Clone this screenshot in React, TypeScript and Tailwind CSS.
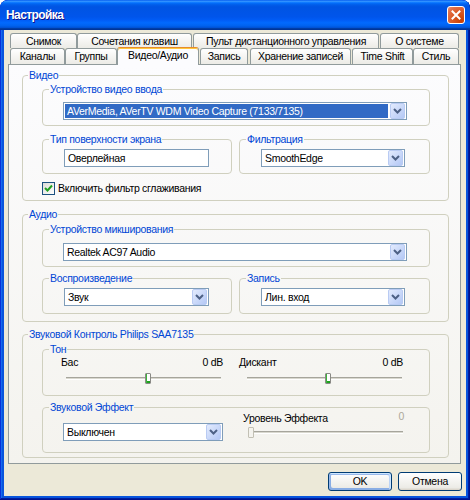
import React from 'react';

const Chevron = () => (
  <svg width="9" height="6" viewBox="0 0 9 6">
    <path d="M1 1 L4.5 4.5 L8 1" stroke="#4D6185" strokeWidth="2" fill="none" />
  </svg>
);

function Combo({ text, className, selected }: { text: string; className: string; selected?: boolean }) {
  return (
    <div className={`flex h-[18px] items-center border border-[#7F9DB9] bg-white ${className}`}>
      <div className="flex-1 h-full p-[1px] min-w-0">
        <div
          className={`h-full flex items-center pl-[2px] whitespace-nowrap overflow-hidden ${
            selected ? 'bg-[#316AC5] text-white' : 'text-black'
          }`}
        >
          {text}
        </div>
      </div>
      <div className="w-[15px] h-[16px] mr-[1px] ml-[1px] flex items-center justify-center rounded-[2px] border border-[#B9CBF3] bg-gradient-to-br from-[#E3EBFD] to-[#B4C8F5]">
        <Chevron />
      </div>
    </div>
  );
}

function Group({
  label,
  className = '',
  legendClass = 'ml-[6px]',
  children,
}: {
  label: string;
  className?: string;
  legendClass?: string;
  children: React.ReactNode;
}) {
  return (
    <fieldset className={`border border-[#D0D0BF] rounded-[4px] min-w-0 ${className}`}>
      <legend className={`px-[1px] text-[#0046D5] leading-[13px] ${legendClass}`}>{label}</legend>
      {children}
    </fieldset>
  );
}

function Slider({ pos, disabled, className }: { pos: number; disabled?: boolean; className: string }) {
  return (
    <div className={`relative h-[11px] flex flex-col justify-center ${className}`}>
      <div className="h-[3px] border-t border-t-[#A6A59C] border-b border-b-white bg-[#D9D8CF]" />
      <div
        className={`absolute top-0 w-[6px] h-[11px] rounded-[1px] border ${
          disabled
            ? 'border-[#C2C0B4] bg-[#F4F3EE]'
            : 'border-[#8A8A86] bg-white shadow-[inset_1px_0_0_#3CB43C,inset_0_-2px_0_#21A121]'
        }`}
        style={{ left: pos }}
      />
    </div>
  );
}

const row1 = [
  { t: 'Снимок', c: 'w-[67px]' },
  { t: 'Сочетания клавиш', c: 'w-[115px]' },
  { t: 'Пульт дистанционного управления', c: 'w-[186px] ml-[1px]' },
  { t: 'О системе', c: 'w-[79px] ml-[1px]' },
];

const row2 = [
  { t: 'Каналы', c: 'w-[55px]' },
  { t: 'Группы', c: 'w-[52px]' },
  { t: 'Видео/Аудио', c: 'w-[82px]', sel: true },
  { t: 'Запись', c: 'w-[48px] ml-[1px]' },
  { t: 'Хранение записей', c: 'w-[101px] ml-[2px]' },
  { t: 'Time Shift', c: 'w-[61px] ml-[1px]' },
  { t: 'Стиль', c: 'w-[46px]' },
];

const tabBase =
  'h-full flex items-center justify-center whitespace-nowrap border border-b-0 border-[#919B9C] rounded-t-[3px] bg-gradient-to-b from-white to-[#ECEBE6] text-black';

export default function App() {
  return (
    <div className="w-[470px] h-[500px] flex flex-col rounded-t-[8px] overflow-hidden bg-[#0855DD] shadow-[inset_-1px_-1px_#00138c,inset_1px_1px_#0831d9,inset_-2px_-2px_#001ea0,inset_2px_2px_#166aee] font-['Liberation_Sans',sans-serif] text-[10.5px] tracking-[-0.3px] leading-[13px]">
      {/* Title bar */}
      <div className="h-[30px] shrink-0 flex items-center justify-between pl-[6px] pr-[5px] rounded-t-[8px] bg-[linear-gradient(to_bottom,#0058EE_0%,#3593FF_4%,#288EFF_6%,#127DFF_8%,#036FFC_10%,#0262EE_14%,#0057E5_20%,#0054E3_24%,#0055EB_56%,#005BF5_66%,#026AFE_76%,#0062EF_86%,#0052D6_92%,#0040AB_94%,#003092_100%)]">
        <span className="text-white font-bold text-[12px] tracking-[-0.6px] [text-shadow:1px_1px_#0F1089]">Настройка</span>
        <div className="w-[18px] h-[18px] mb-[1px] rounded-[3px] border border-white bg-[radial-gradient(circle_at_85%_85%,#C93F00_0%,#DA5A26_50%,#E2714A_80%,#EB9278_100%)] flex items-center justify-center">
          <svg width="10" height="10" viewBox="0 0 10 10">
            <path d="M1.5 1.5 L8.5 8.5 M8.5 1.5 L1.5 8.5" stroke="white" strokeWidth="2" strokeLinecap="square" />
          </svg>
        </div>
      </div>

      {/* Body */}
      <div className="flex-1 mx-[4px] mb-[4px] bg-[#ECE9D8] flex flex-col">
        {/* Tabs */}
        <div className="pt-[3px] pl-[6px]">
          <div className="flex h-[15px]">
            {row1.map((t) => (
              <div key={t.t} className={`${tabBase} ${t.c}`}>
                {t.t}
              </div>
            ))}
          </div>
          <div className="flex h-[16px] items-start">
            {row2.map((t) =>
              t.sel ? (
                <div
                  key={t.t}
                  className={`relative z-10 -mt-[1px] h-[18px] pb-[3px] flex items-center justify-center whitespace-nowrap border border-b-0 border-[#919B9C] border-t-[#E68B2C] rounded-t-[3px] bg-[#FCFCFE] shadow-[inset_0_1px_0_#FFC73C] text-black ${t.c}`}
                >
                  {t.t}
                </div>
              ) : (
                <div key={t.t} className={`${tabBase} ${t.c}`}>
                  {t.t}
                </div>
              )
            )}
          </div>
        </div>

        {/* Panel */}
        <div className="ml-[4px] w-[453px] h-[400px] border border-[#919B9C] bg-gradient-to-b from-[#FCFCFE] to-[#F4F3EE] pl-[13px] pr-[11px] pt-[4px] flex flex-col">
          {/* Video */}
          <Group label="Видео" legendClass="ml-[5px]">
            <div className="px-[18px] pl-[19px] pb-[5px]">
              <Group label="Устройство видео ввода" className="mt-[1px]">
                <div className="pl-[20px] pt-[6px] pb-[5px]">
                  <Combo text="AVerMedia, AVerTV WDM Video Capture (7133/7135)" className="w-[344px]" selected />
                </div>
              </Group>
              <div className="flex gap-[7px] mt-[7px]">
                <Group label="Тип поверхности экрана" className="w-[190px]">
                  <div className="pl-[21px] pt-[3px] pb-[6px]">
                    <div className="w-[145px] h-[18px] border border-[#7F9DB9] bg-white flex items-center pl-[3px]">
                      Оверлейная
                    </div>
                  </div>
                </Group>
                <Group label="Фильтрация" className="w-[191px]">
                  <div className="pl-[21px] pt-[3px] pb-[6px]">
                    <Combo text="SmoothEdge" className="w-[144px]" />
                  </div>
                </Group>
              </div>
              <div className="mt-[8px] flex items-center h-[13px]">
                <div className="w-[13px] h-[13px] border border-[#1C5180] bg-gradient-to-br from-[#DCDCD7] to-white flex items-center justify-center">
                  <svg width="9" height="9" viewBox="0 0 9 9">
                    <path d="M1 4 L3.5 6.5 L8 1.5" stroke="#21A121" strokeWidth="2" fill="none" />
                  </svg>
                </div>
                <span className="ml-[3px]">Включить фильтр сглаживания</span>
              </div>
            </div>
          </Group>

          {/* Audio */}
          <Group label="Аудио" className="mt-[7px]" legendClass="ml-[5px]">
            <div className="px-[18px] pl-[19px] pb-[7px]">
              <Group label="Устройство микширования" className="mt-[2px]">
                <div className="pl-[20px] pt-[7px] pb-[5px]">
                  <Combo text="Realtek AC97 Audio" className="w-[344px]" />
                </div>
              </Group>
              <div className="flex gap-[7px] mt-[5px]">
                <Group label="Воспроизведение" className="w-[190px]">
                  <div className="pl-[21px] pt-[3px] pb-[7px]">
                    <Combo text="Звук" className="w-[145px]" />
                  </div>
                </Group>
                <Group label="Запись" className="w-[191px]">
                  <div className="pl-[21px] pt-[3px] pb-[7px]">
                    <Combo text="Лин. вход" className="w-[144px]" />
                  </div>
                </Group>
              </div>
            </div>
          </Group>

          {/* Philips */}
          <Group label="Звуковой Контроль Philips SAA7135" className="mt-[6px]" legendClass="ml-[5px]">
            <div className="px-[18px] pl-[19px] pb-[4px]">
              <Group label="Тон" className="mt-[2px]">
                <div className="flex pl-[18px] pb-[11px]">
                  <div className="w-[162px]">
                    <div className="flex justify-between h-[13px]">
                      <span>Бас</span>
                      <span>0 dB</span>
                    </div>
                    <Slider pos={79} className="mt-[4px] ml-[5px] mr-[2px]" />
                  </div>
                  <div className="w-[164px] ml-[16px]">
                    <div className="flex justify-between h-[13px]">
                      <span>Дискант</span>
                      <span>0 dB</span>
                    </div>
                    <Slider pos={78} className="mt-[4px] ml-[8px] mr-[1px]" />
                  </div>
                </div>
              </Group>
              <Group label="Звуковой Эффект" className="mt-[5px]">
                <div className="flex items-start pl-[20px] pb-[11px]">
                  <Combo text="Выключен" className="w-[160px] mt-[9px]" />
                  <div className="w-[161px] ml-[20px] -mt-[2px]">
                    <div className="flex justify-between h-[13px]">
                      <span>Уровень Эффекта</span>
                      <span className="text-[#ACA899] -mt-[2px]">0</span>
                    </div>
                    <Slider pos={0} disabled className="mt-[2px] ml-[5px] mr-[1px]" />
                  </div>
                </div>
              </Group>
            </div>
          </Group>
        </div>

        {/* Buttons */}
        <div className="flex justify-end gap-[6px] mt-[8px] pr-[4px]">
          <button className="w-[64px] h-[19px] rounded-[3px] border border-[#003C74] bg-[linear-gradient(180deg,#fff,#ecebe6_86%,#d6d0c5)] shadow-[inset_-1px_1px_#cee7ff,inset_1px_2px_#98b8ea,inset_-2px_2px_#bcd4f6,inset_1px_-1px_#89ade4,inset_2px_-2px_#89ade4] text-black">
            OK
          </button>
          <button className="w-[64px] h-[19px] rounded-[3px] border border-[#003C74] bg-[linear-gradient(180deg,#fff,#ecebe6_86%,#d6d0c5)] text-black">
            Отмена
          </button>
        </div>
      </div>
    </div>
  );
}
